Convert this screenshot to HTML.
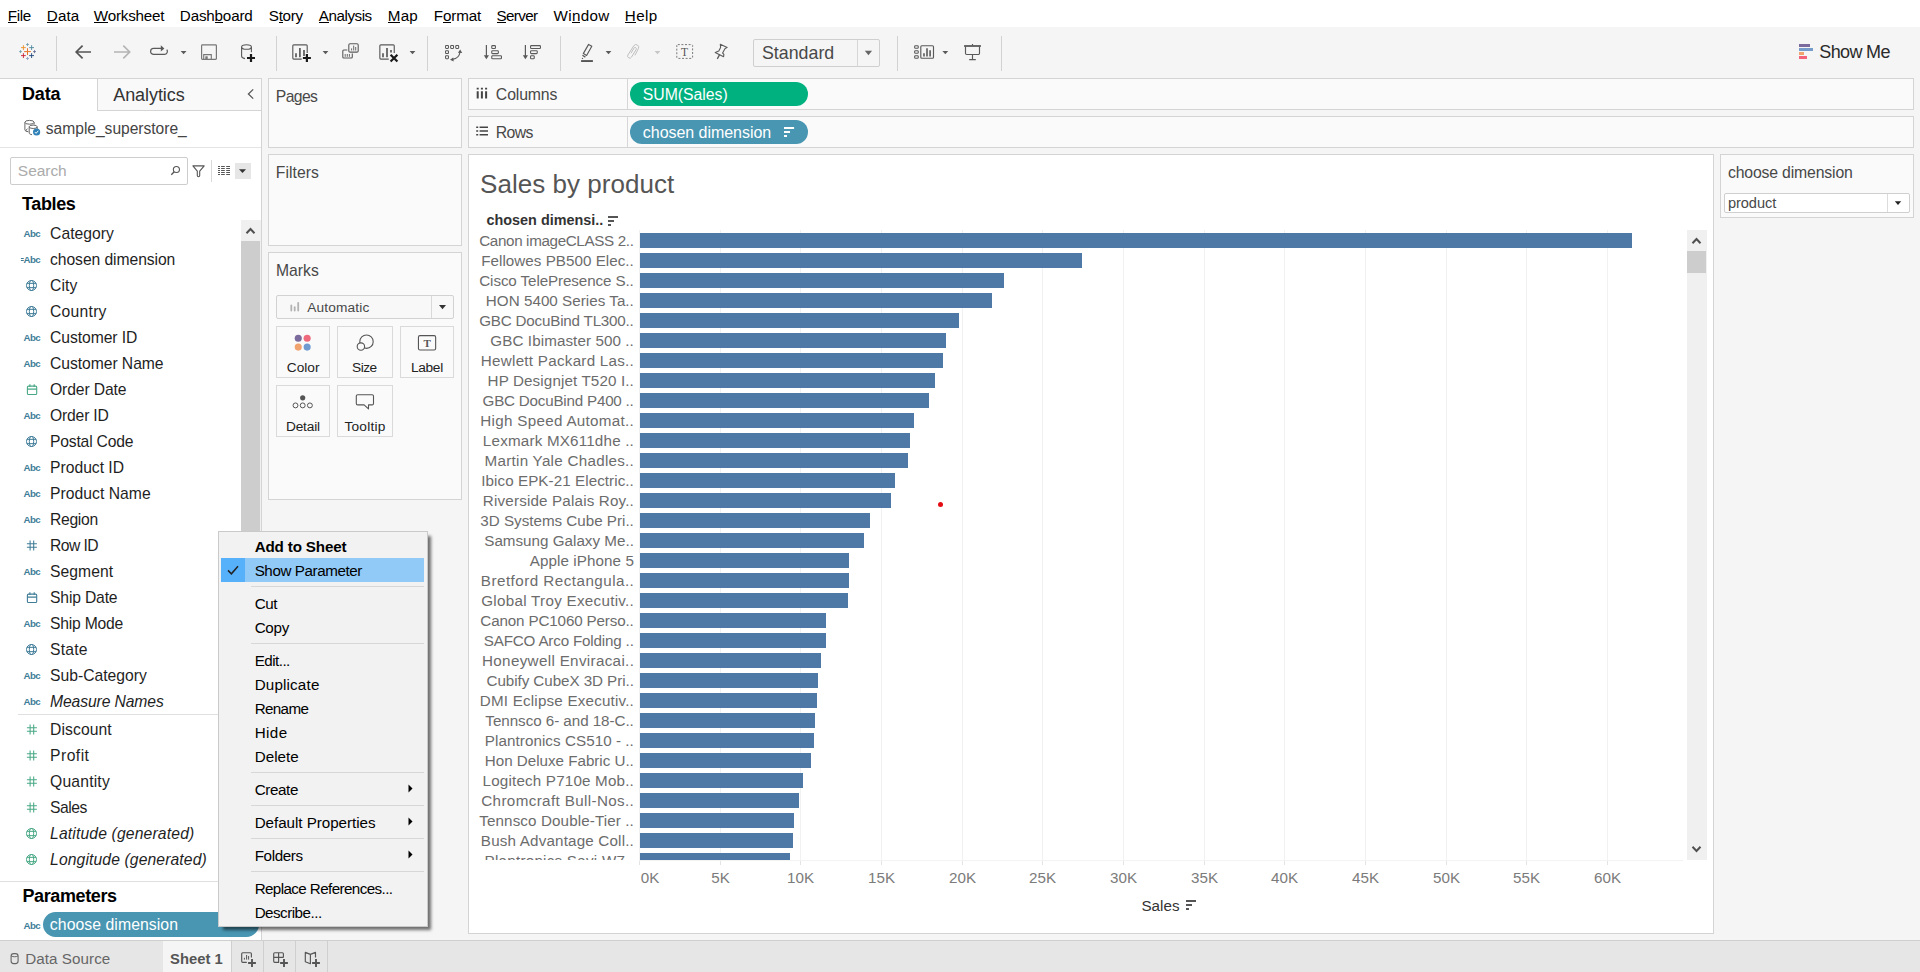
<!DOCTYPE html>
<html lang="en"><head><meta charset="utf-8"><title>Tableau - Sales by product</title>
<style>
*{box-sizing:border-box;margin:0;padding:0}
html,body{width:1920px;height:972px;overflow:hidden;background:#f5f5f5;font-family:"Liberation Sans",sans-serif;color:#333}
#app,#app *{position:absolute}
#app{left:0;top:0;width:1920px;height:972px;overflow:hidden}
.t{white-space:nowrap;line-height:1}
svg{display:block;overflow:visible}
.card{background:#fafafa;border:1px solid #d4d4d4}
.mbtn{background:#fafafa;border:1px solid #dadada}
</style></head><body><div id="app">

<div style="left:0px;top:0px;width:1920px;height:27px;background:#fff"></div>
<div class="t" style="top:8.00px;font-size:15.2px;color:#000;letter-spacing:-0.395px;left:7.85px;">File</div><div style="left:8.1px;top:22px;width:8.9px;height:1px;background:#000"></div>
<div class="t" style="top:8.00px;font-size:15.2px;color:#000;letter-spacing:0.069px;left:46.85px;">Data</div><div style="left:47.0px;top:22px;width:10.6px;height:1px;background:#000"></div>
<div class="t" style="top:8.00px;font-size:15.2px;color:#000;letter-spacing:-0.214px;left:93.85px;">Worksheet</div><div style="left:94.0px;top:22px;width:13.9px;height:1px;background:#000"></div>
<div class="t" style="top:8.00px;font-size:15.2px;color:#000;letter-spacing:-0.177px;left:179.85px;">Dashboard</div><div style="left:214.8px;top:22px;width:8.0px;height:1px;background:#000"></div>
<div class="t" style="top:8.00px;font-size:15.2px;color:#000;letter-spacing:-0.288px;left:268.85px;">Story</div><div style="left:278.9px;top:22px;width:3.8px;height:1px;background:#000"></div>
<div class="t" style="top:8.00px;font-size:15.2px;color:#000;letter-spacing:-0.466px;left:318.85px;">Analysis</div><div style="left:319.1px;top:22px;width:9.7px;height:1px;background:#000"></div>
<div class="t" style="top:8.00px;font-size:15.2px;color:#000;letter-spacing:0.177px;left:387.85px;">Map</div><div style="left:388.1px;top:22px;width:12.3px;height:1px;background:#000"></div>
<div class="t" style="top:8.00px;font-size:15.2px;color:#000;letter-spacing:-0.162px;left:433.85px;">Format</div><div style="left:443.2px;top:22px;width:8.1px;height:1px;background:#000"></div>
<div class="t" style="top:8.00px;font-size:15.2px;color:#000;letter-spacing:-0.627px;left:496.55px;">Server</div><div style="left:496.8px;top:22px;width:9.7px;height:1px;background:#000"></div>
<div class="t" style="top:8.00px;font-size:15.2px;color:#000;letter-spacing:0.314px;left:553.55px;">Window</div><div style="left:572.1px;top:22px;width:8.0px;height:1px;background:#000"></div>
<div class="t" style="top:8.00px;font-size:15.2px;color:#000;letter-spacing:0.350px;left:624.85px;">Help</div><div style="left:625.0px;top:22px;width:10.6px;height:1px;background:#000"></div>
<div style="left:0px;top:27px;width:1920px;height:51px;background:#f5f5f5"></div>
<svg style="left:0;top:27px" width="1920" height="51" viewBox="0 27 1920 51"><path d="M24.1 51.6H30.9M27.5 48.2V55.0" stroke="#e8762d" stroke-width="1.0" fill="none"/><path d="M21.0 47.6H25.799999999999997M23.4 45.2V50.0" stroke="#eb9129" stroke-width="0.9" fill="none"/><path d="M29.200000000000003 47.6H34.0M31.6 45.2V50.0" stroke="#4f8aa0" stroke-width="0.9" fill="none"/><path d="M21.0 55.6H25.799999999999997M23.4 53.2V58.0" stroke="#c72037" stroke-width="0.9" fill="none"/><path d="M29.200000000000003 55.6H34.0M31.6 53.2V58.0" stroke="#1f457e" stroke-width="0.9" fill="none"/><path d="M26.0 44.5H29.0M27.5 43.0V46.0" stroke="#6a9aa8" stroke-width="0.8" fill="none"/><path d="M26.0 58.5H29.0M27.5 57.0V60.0" stroke="#8a9cc5" stroke-width="0.8" fill="none"/><path d="M19.0 51.6H22.0M20.5 50.1V53.1" stroke="#6a9aa8" stroke-width="0.8" fill="none"/><path d="M33.0 51.6H36.0M34.5 50.1V53.1" stroke="#5c6692" stroke-width="0.8" fill="none"/><rect x="56" y="36" width="1" height="35" fill="#d2d2d2"/><rect x="276" y="36" width="1" height="35" fill="#d2d2d2"/><rect x="427" y="36" width="1" height="35" fill="#d2d2d2"/><rect x="560" y="36" width="1" height="35" fill="#d2d2d2"/><rect x="897" y="36" width="1" height="35" fill="#d2d2d2"/><rect x="1001" y="36" width="1" height="35" fill="#d2d2d2"/><path d="M91 52H76.3M82.6 45.6L76.2 52l6.4 6.4" stroke="#555" stroke-width="1.7" fill="none"/><path d="M114 52H129.6M123.3 45.6L129.7 52l-6.4 6.4" stroke="#b4b4b4" stroke-width="1.6" fill="none"/><path d="M161 48.4H153.6a3 3 0 0 0 0 6H164.4a3 3 0 0 0 2.4-4.8" stroke="#5a5a5a" stroke-width="1.2" fill="none"/><path d="M160.8 45.2L164.4 48.4 160.8 51.6z" fill="#5a5a5a"/><path d="M180.7 51h5.8L183.6 54.3z" fill="#5a5a5a"/><rect x="201.6" y="44.9" width="14.8" height="14.4" rx="0.8" stroke="#777" stroke-width="1.2" fill="none"/><path d="M203.7 59.3V54.6H211.3V59.3" stroke="#777" stroke-width="1.1" fill="none"/><rect x="205.3" y="56.3" width="2.4" height="3" fill="#777"/><ellipse cx="246.5" cy="47" rx="4.9" ry="2.3" stroke="#5a5a5a" stroke-width="1.1" fill="none"/><path d="M241.6 47V56.2c0 1.1 1.4 2 3.4 2.4M251.4 47v5.2" stroke="#5a5a5a" stroke-width="1.1" fill="none"/><path d="M247 58H255M251 54V62" stroke="#1a1a1a" stroke-width="2.2" fill="none"/><path d="M307.2 53V45.8a1 1 0 0 0-1-1H293.8a1 1 0 0 0-1 1V58.1a1 1 0 0 0 1 1H301.7" stroke="#5a5a5a" stroke-width="1.15" fill="none"/><path d="M296 57.2V53.3M299.9 57.2V48M304 56V50" stroke="#5a5a5a" stroke-width="1.7"/><path d="M302.9 58H310.9M306.9 54V62" stroke="#1a1a1a" stroke-width="2.2" fill="none"/><path d="M322.6 51h5.8L325.5 54.3z" fill="#5a5a5a"/><rect x="348.8" y="43.8" width="9.4" height="8.3" rx="1.2" stroke="#5a5a5a" stroke-width="1.1" fill="none"/><path d="M351.6 50.5V48.4M353.7 50.5V45.6M355.7 50.5V47" stroke="#5a5a5a" stroke-width="0.9"/><path d="M347.3 50H343.8a1 1 0 0 0-1 1v6a1 1 0 0 0 1 1H351.3a1 1 0 0 0 1-1V53.6" stroke="#5a5a5a" stroke-width="1.1" fill="none"/><path d="M345.2 56.8V54M347.3 56.8V54M349.4 56.8V54" stroke="#5a5a5a" stroke-width="0.9"/><path d="M394.25 53V45.8a1 1 0 0 0-1-1H380.85a1 1 0 0 0-1 1V58.1a1 1 0 0 0 1 1H388.75" stroke="#5a5a5a" stroke-width="1.15" fill="none"/><path d="M383 57.2V53.3M387 57.2V48M391 52.6V50" stroke="#5a5a5a" stroke-width="1.7"/><path d="M390.6 54.7l6.8 6.8M397.4 54.7l-6.8 6.8" stroke="#1a1a1a" stroke-width="2.2"/><path d="M409.6 51h5.8L412.5 54.3z" fill="#5a5a5a"/><rect x="445.55" y="45.55" width="2.9" height="2.9" rx="0.6" stroke="#5a5a5a" stroke-width="1.05" fill="none"/><rect x="450.65000000000003" y="45.55" width="2.9" height="2.9" rx="0.6" stroke="#5a5a5a" stroke-width="1.05" fill="none"/><rect x="455.75" y="45.55" width="2.9" height="2.9" rx="0.6" stroke="#5a5a5a" stroke-width="1.05" fill="none"/><rect x="445.55" y="50.65" width="2.9" height="2.9" rx="0.6" stroke="#5a5a5a" stroke-width="1.05" fill="none"/><rect x="445.55" y="55.75" width="2.9" height="2.9" rx="0.6" stroke="#5a5a5a" stroke-width="1.05" fill="none"/><path d="M452.4 59.4C457 58.6 459.6 55.6 460 52" stroke="#5a5a5a" stroke-width="1.15" fill="none"/><path d="M460.2 49.6l2 3.4-4.3-.3zM450 59.7l3.2-2.3.5 4.1z" fill="#5a5a5a"/><path d="M486.4 45V56" stroke="#5a5a5a" stroke-width="1.2"/><path d="M483.79999999999995 55.2h5.2L486.4 59.2z" fill="#5a5a5a"/><rect x="491.75" y="45.6" width="3.6999999999999997" height="2.9" rx="0.8" stroke="#5a5a5a" stroke-width="1.1" fill="none"/><rect x="491.75" y="50.7" width="6.6" height="2.9" rx="0.8" stroke="#5a5a5a" stroke-width="1.1" fill="none"/><rect x="491.75" y="55.8" width="9.700000000000001" height="2.9" rx="0.8" stroke="#5a5a5a" stroke-width="1.1" fill="none"/><path d="M525.4 45V56" stroke="#5a5a5a" stroke-width="1.2"/><path d="M522.8 55.2h5.2L525.4 59.2z" fill="#5a5a5a"/><rect x="530.55" y="45.6" width="9.9" height="2.9" rx="0.8" stroke="#5a5a5a" stroke-width="1.1" fill="none"/><rect x="530.55" y="50.7" width="6.699999999999999" height="2.9" rx="0.8" stroke="#5a5a5a" stroke-width="1.1" fill="none"/><rect x="530.55" y="55.8" width="3.6999999999999997" height="2.9" rx="0.8" stroke="#5a5a5a" stroke-width="1.1" fill="none"/><path d="M588.6 44.4L591.8 46.2 586.6 55.5 583.3 53.6z" stroke="#5a5a5a" stroke-width="1.15" fill="none" stroke-linejoin="round"/><path d="M582.4 55.3L585.4 57.1" stroke="#5a5a5a" stroke-width="1.3"/><circle cx="582.5" cy="58.4" r=".7" fill="#5a5a5a"/><rect x="581.1" y="60.1" width="11.8" height="1.9" fill="#555"/><path d="M605.6 51h5.8L608.5 54.3z" fill="#5a5a5a"/><path d="M634.9 55.4L638.5 48.3A2.7 2.7 0 0 0 633.9 45.6L627.9 55A2.1 2.1 0 0 0 631.6 57L636.3 49.2A1.3 1.3 0 0 0 634.1 47.9L631 53.2" stroke="#bcbcbc" stroke-width="0.95" fill="none"/><path d="M654.6 51h5.8L657.5 54.3z" fill="#c6c6c6"/><rect x="676.8" y="44.6" width="15.8" height="13.8" rx="1" stroke="#7a7a7a" stroke-width="1" stroke-dasharray="2 1.6" fill="none"/><text x="684.6" y="56" text-anchor="middle" font-family="Liberation Serif,serif" font-size="11.5" fill="#555">T</text><path d="M720.3 44.2L727.2 47.4 724.9 48.8 722.6 53 723.9 54.3 723.6 56.7 715.2 52.4 718.8 51.1 720.6 47.5z" stroke="#5a5a5a" stroke-width="1.1" fill="none" stroke-linejoin="round"/><path d="M719.6 54.6L717.3 58.9" stroke="#5a5a5a" stroke-width="1.3"/><rect x="914.65" y="45.75" width="3.6" height="2.5" rx="0.8" stroke="#5a5a5a" stroke-width="1.1" fill="none"/><rect x="914.65" y="50.75" width="3.6" height="2.5" rx="0.8" stroke="#5a5a5a" stroke-width="1.1" fill="none"/><rect x="914.65" y="55.75" width="3.6" height="2.5" rx="0.8" stroke="#5a5a5a" stroke-width="1.1" fill="none"/><rect x="920.8" y="45.75" width="12.7" height="12.5" rx="1" stroke="#5a5a5a" stroke-width="1.15" fill="none"/><path d="M924 56.6V53.2M927 56.6V48.2M930.1 56.6V50.2" stroke="#5a5a5a" stroke-width="1.6"/><path d="M942.4 51h5.8L945.3 54.3z" fill="#5a5a5a"/><path d="M964.1 46H980.9" stroke="#5a5a5a" stroke-width="1.8"/><path d="M972.5 44v1.5M965.5 46.5V53.3a1.2 1.2 0 0 0 1.2 1.2H978.3a1.2 1.2 0 0 0 1.2-1.2V46.5M972.5 54.5V59.6M969.2 59.6H975.8" stroke="#5a5a5a" stroke-width="1.15" fill="none"/><rect x="1799" y="44" width="11" height="3" fill="#7b6b9c"/><rect x="1799" y="48" width="14" height="3" fill="#769ccb"/><rect x="1799" y="52" width="5" height="3" fill="#f0a36f"/><rect x="1799" y="56" width="8" height="3" fill="#f3647b"/><path d="M864.8 50.8h7.3L868.45 55.2z" fill="#666"/></svg>
<div style="left:753px;top:39px;width:127px;height:28px;border:1px solid #cfcfcf;border-radius:2px"></div>
<div style="left:857px;top:40px;width:1px;height:26px;background:#d6d6d6"></div>
<div class="t" style="top:45.00px;font-size:17.8px;color:#484848;letter-spacing:0.018px;left:761.95px;">Standard</div>
<div class="t" style="top:43.00px;font-size:18px;color:#2a2a2a;letter-spacing:-0.658px;left:1819.35px;">Show Me</div>
<div style="left:0px;top:78px;width:262px;height:862px;background:#fff;border-right:1px solid #d4d4d4"></div>
<div style="left:97px;top:78px;width:165px;height:33px;background:#f9f9f9;border:1px solid #d4d4d4"></div>
<div style="left:0px;top:78px;width:262px;height:1px;background:#d4d4d4"></div>
<div class="t" style="top:85.00px;font-size:18px;color:#000;font-weight:bold;letter-spacing:-0.205px;left:22.05px;">Data</div>
<div class="t" style="top:86.00px;font-size:18px;color:#333;letter-spacing:-0.079px;left:113.25px;">Analytics</div>
<svg style="left:245px;top:87px" width="9" height="14" viewBox="245 87 9 14"><path d="M253.2 89.4L248.4 94l4.8 4.6" stroke="#555" stroke-width="1.25" fill="none"/></svg>
<svg style="left:22px;top:118px" width="20" height="20" viewBox="22 118 20 20"><g stroke="#666" stroke-width="1" fill="none"><ellipse cx="29.5" cy="122.3" rx="4.6" ry="1.9"/><path d="M24.9 122.3v7.6c0 .9 1.5 1.6 3.4 1.8M34.1 122.3v2.2"/><ellipse cx="33.2" cy="126.8" rx="4" ry="1.7"/><path d="M29.2 126.8v6.2c0 .8 1.1 1.4 2.8 1.7M37.2 126.8v2.2"/><path d="M27.6 128.6l-1.7 1.7 1.7 1.7"/></g><circle cx="36.6" cy="132" r="3.6" fill="#2f81b7"/><path d="M34.9 132.1l1.2 1.2 2.2-2.5" stroke="#fff" stroke-width="1" fill="none"/></svg>
<div class="t" style="top:121.00px;font-size:15.6px;color:#444;letter-spacing:-0.023px;left:45.85px;">sample_superstore_</div>
<div style="left:0px;top:147px;width:261px;height:1px;background:#e4e4e4"></div>
<div style="left:10px;top:157px;width:178px;height:28px;border:1px solid #cdcdcd;border-radius:2px;background:#fff"></div>
<div class="t" style="top:163.00px;font-size:15.5px;color:#ababab;letter-spacing:-0.045px;left:17.85px;">Search</div>
<svg style="left:169px;top:164px" width="13" height="13" viewBox="169 164 13 13"><circle cx="176.4" cy="169.5" r="3.05" stroke="#555" stroke-width="1.1" fill="none"/><path d="M174.2 171.8L171.3 174.7" stroke="#555" stroke-width="1.3"/></svg>
<svg style="left:191px;top:163px" width="15" height="16" viewBox="191 163 15 16"><path d="M192.9 165.9H204.2L199.7 171.2V175.6a1.2 1.2 0 0 1-2.4 0V171.2z" stroke="#555" stroke-width="1.1" fill="none" stroke-linejoin="round"/></svg>
<div style="left:211px;top:160px;width:1px;height:22px;background:#d9d9d9"></div>
<svg style="left:217px;top:165px" width="15" height="12" viewBox="217 165 15 12"><path d="M218 166.5h2M221.1 166.5h3.7M226.2 166.5h3.8M218 168.5h2M221.1 168.5h3.7M226.2 168.5h3.8M218 170.5h2M221.1 170.5h3.7M226.2 170.5h3.8M218 172.5h2M221.1 172.5h3.7M226.2 172.5h3.8M218 174.5h2M221.1 174.5h3.7M226.2 174.5h3.8" stroke="#555" stroke-width="1"/></svg>
<div style="left:235px;top:163px;width:16px;height:16px;background:#e6e6e6"></div>
<svg style="left:235px;top:163px" width="16" height="16" viewBox="235 163 16 16"><path d="M239 169.2h7L242.5 173z" fill="#333"/></svg>
<div class="t" style="top:195.00px;font-size:18px;color:#000;font-weight:bold;letter-spacing:-0.358px;left:21.95px;">Tables</div>
<div style="left:241px;top:220px;width:20px;height:661px;background:#f0f0f0"></div>
<div style="left:241px;top:241px;width:19px;height:620px;background:#cdcdcd"></div>
<svg style="left:244px;top:226px" width="13" height="9" viewBox="244 226 13 9"><path d="M246.5 233.2L250.5 229 254.5 233.2" stroke="#505050" stroke-width="2" fill="none"/></svg>
<div class="t" style="top:229.00px;font-size:9.7px;color:#3f7c98;font-weight:bold;letter-spacing:-0.606px;left:23.55px;">Abc</div>
<div class="t" style="top:226.00px;font-size:15.7px;color:#1f1f1f;letter-spacing:0.035px;left:50.05px;">Category</div>
<div class="t" style="top:255.00px;font-size:9.7px;color:#3f7c98;font-weight:bold;letter-spacing:-0.606px;left:23.55px;">Abc</div><svg style="left:20px;top:255px" width="5" height="8" viewBox="20 255 5 8"><path d="M20.9 258.5h2.9M20.9 260.5h2.9" stroke="#3f7c98" stroke-width="1.05"/></svg>
<div class="t" style="top:252.00px;font-size:15.7px;color:#1f1f1f;letter-spacing:-0.077px;left:50.05px;">chosen dimension</div>
<svg style="left:24px;top:277px" width="16" height="16" viewBox="24 277 16 16"><g stroke="#3f7c98" stroke-width="1" fill="none"><circle cx="31.5" cy="285.5" r="5"/><ellipse cx="31.5" cy="285.5" rx="2.15" ry="5"/><path d="M26.8 283.35h9.4M26.8 287.65h9.4"/></g></svg>
<div class="t" style="top:278.00px;font-size:15.7px;color:#1f1f1f;letter-spacing:0.123px;left:50.05px;">City</div>
<svg style="left:24px;top:303px" width="16" height="16" viewBox="24 303 16 16"><g stroke="#3f7c98" stroke-width="1" fill="none"><circle cx="31.5" cy="311.5" r="5"/><ellipse cx="31.5" cy="311.5" rx="2.15" ry="5"/><path d="M26.8 309.35h9.4M26.8 313.65h9.4"/></g></svg>
<div class="t" style="top:304.00px;font-size:15.7px;color:#1f1f1f;letter-spacing:0.244px;left:50.05px;">Country</div>
<div class="t" style="top:333.00px;font-size:9.7px;color:#3f7c98;font-weight:bold;letter-spacing:-0.606px;left:23.55px;">Abc</div>
<div class="t" style="top:330.00px;font-size:15.7px;color:#1f1f1f;letter-spacing:-0.075px;left:50.05px;">Customer ID</div>
<div class="t" style="top:359.00px;font-size:9.7px;color:#3f7c98;font-weight:bold;letter-spacing:-0.606px;left:23.55px;">Abc</div>
<div class="t" style="top:356.00px;font-size:15.7px;color:#1f1f1f;letter-spacing:-0.059px;left:50.05px;">Customer Name</div>
<svg style="left:24px;top:381px" width="16" height="16" viewBox="24 381 16 16"><g stroke="#48a885" stroke-width="1.1" fill="none"><rect x="27.4" y="386.1" width="9.3" height="8.4" rx="1.1"/><path d="M27.4 389.1h9.3M29.9 384.3v2.6M34.199999999999996 384.3v2.6"/></g></svg>
<div class="t" style="top:382.00px;font-size:15.7px;color:#1f1f1f;letter-spacing:-0.134px;left:50.05px;">Order Date</div>
<div class="t" style="top:411.00px;font-size:9.7px;color:#3f7c98;font-weight:bold;letter-spacing:-0.606px;left:23.55px;">Abc</div>
<div class="t" style="top:408.00px;font-size:15.7px;color:#1f1f1f;letter-spacing:-0.194px;left:50.05px;">Order ID</div>
<svg style="left:24px;top:433px" width="16" height="16" viewBox="24 433 16 16"><g stroke="#3f7c98" stroke-width="1" fill="none"><circle cx="31.5" cy="441.5" r="5"/><ellipse cx="31.5" cy="441.5" rx="2.15" ry="5"/><path d="M26.8 439.35h9.4M26.8 443.65h9.4"/></g></svg>
<div class="t" style="top:434.00px;font-size:15.7px;color:#1f1f1f;letter-spacing:-0.207px;left:50.05px;">Postal Code</div>
<div class="t" style="top:463.00px;font-size:9.7px;color:#3f7c98;font-weight:bold;letter-spacing:-0.606px;left:23.55px;">Abc</div>
<div class="t" style="top:460.00px;font-size:15.7px;color:#1f1f1f;letter-spacing:-0.014px;left:50.05px;">Product ID</div>
<div class="t" style="top:489.00px;font-size:9.7px;color:#3f7c98;font-weight:bold;letter-spacing:-0.606px;left:23.55px;">Abc</div>
<div class="t" style="top:486.00px;font-size:15.7px;color:#1f1f1f;letter-spacing:0.029px;left:50.05px;">Product Name</div>
<div class="t" style="top:515.00px;font-size:9.7px;color:#3f7c98;font-weight:bold;letter-spacing:-0.606px;left:23.55px;">Abc</div>
<div class="t" style="top:512.00px;font-size:15.7px;color:#1f1f1f;letter-spacing:-0.324px;left:50.05px;">Region</div>
<svg style="left:24px;top:537px" width="16" height="16" viewBox="24 537 16 16"><path d="M30.099999999999998 540.5v10M33.699999999999996 540.5v10M26.9 543.7h10M26.9 547.3h10" stroke="#3f7c98" stroke-width="1.05"/></svg>
<div class="t" style="top:538.00px;font-size:15.7px;color:#1f1f1f;letter-spacing:-0.567px;left:50.05px;">Row ID</div>
<div class="t" style="top:567.00px;font-size:9.7px;color:#3f7c98;font-weight:bold;letter-spacing:-0.606px;left:23.55px;">Abc</div>
<div class="t" style="top:564.00px;font-size:15.7px;color:#1f1f1f;letter-spacing:0.051px;left:50.05px;">Segment</div>
<svg style="left:24px;top:589px" width="16" height="16" viewBox="24 589 16 16"><g stroke="#3f7c98" stroke-width="1.1" fill="none"><rect x="27.4" y="594.0999999999999" width="9.3" height="8.4" rx="1.1"/><path d="M27.4 597.0999999999999h9.3M29.9 592.3v2.6M34.199999999999996 592.3v2.6"/></g></svg>
<div class="t" style="top:590.00px;font-size:15.7px;color:#1f1f1f;letter-spacing:-0.176px;left:50.05px;">Ship Date</div>
<div class="t" style="top:619.00px;font-size:9.7px;color:#3f7c98;font-weight:bold;letter-spacing:-0.606px;left:23.55px;">Abc</div>
<div class="t" style="top:616.00px;font-size:15.7px;color:#1f1f1f;letter-spacing:-0.212px;left:50.05px;">Ship Mode</div>
<svg style="left:24px;top:641px" width="16" height="16" viewBox="24 641 16 16"><g stroke="#3f7c98" stroke-width="1" fill="none"><circle cx="31.5" cy="649.5" r="5"/><ellipse cx="31.5" cy="649.5" rx="2.15" ry="5"/><path d="M26.8 647.35h9.4M26.8 651.65h9.4"/></g></svg>
<div class="t" style="top:642.00px;font-size:15.7px;color:#1f1f1f;letter-spacing:0.190px;left:50.05px;">State</div>
<div class="t" style="top:671.00px;font-size:9.7px;color:#3f7c98;font-weight:bold;letter-spacing:-0.606px;left:23.55px;">Abc</div>
<div class="t" style="top:668.00px;font-size:15.7px;color:#1f1f1f;letter-spacing:-0.009px;left:50.05px;">Sub-Category</div>
<div class="t" style="top:697.00px;font-size:9.7px;color:#3f7c98;font-weight:bold;letter-spacing:-0.606px;left:23.55px;">Abc</div>
<div class="t" style="top:694.00px;font-size:15.7px;color:#1f1f1f;font-style:italic;letter-spacing:-0.116px;left:50.05px;">Measure Names</div>
<div style="left:18px;top:714px;width:223px;height:1px;background:#e0e0e0"></div>
<svg style="left:24px;top:721px" width="16" height="16" viewBox="24 721 16 16"><path d="M30.099999999999998 724.5v10M33.699999999999996 724.5v10M26.9 727.7h10M26.9 731.3h10" stroke="#48a885" stroke-width="1.05"/></svg>
<div class="t" style="top:722.00px;font-size:15.7px;color:#1f1f1f;letter-spacing:0.093px;left:50.05px;">Discount</div>
<svg style="left:24px;top:747px" width="16" height="16" viewBox="24 747 16 16"><path d="M30.099999999999998 750.5v10M33.699999999999996 750.5v10M26.9 753.7h10M26.9 757.3h10" stroke="#48a885" stroke-width="1.05"/></svg>
<div class="t" style="top:748.00px;font-size:15.7px;color:#1f1f1f;letter-spacing:0.455px;left:50.05px;">Profit</div>
<svg style="left:24px;top:773px" width="16" height="16" viewBox="24 773 16 16"><path d="M30.099999999999998 776.5v10M33.699999999999996 776.5v10M26.9 779.7h10M26.9 783.3h10" stroke="#48a885" stroke-width="1.05"/></svg>
<div class="t" style="top:774.00px;font-size:15.7px;color:#1f1f1f;letter-spacing:0.180px;left:50.05px;">Quantity</div>
<svg style="left:24px;top:799px" width="16" height="16" viewBox="24 799 16 16"><path d="M30.099999999999998 802.5v10M33.699999999999996 802.5v10M26.9 805.7h10M26.9 809.3h10" stroke="#48a885" stroke-width="1.05"/></svg>
<div class="t" style="top:800.00px;font-size:15.7px;color:#1f1f1f;letter-spacing:-0.463px;left:50.05px;">Sales</div>
<svg style="left:24px;top:825px" width="16" height="16" viewBox="24 825 16 16"><g stroke="#48a885" stroke-width="1" fill="none"><circle cx="31.5" cy="833.5" r="5"/><ellipse cx="31.5" cy="833.5" rx="2.15" ry="5"/><path d="M26.8 831.35h9.4M26.8 835.65h9.4"/></g></svg>
<div class="t" style="top:826.00px;font-size:15.7px;color:#1f1f1f;font-style:italic;letter-spacing:0.153px;left:50.05px;">Latitude (generated)</div>
<svg style="left:24px;top:851px" width="16" height="16" viewBox="24 851 16 16"><g stroke="#48a885" stroke-width="1" fill="none"><circle cx="31.5" cy="859.5" r="5"/><ellipse cx="31.5" cy="859.5" rx="2.15" ry="5"/><path d="M26.8 857.35h9.4M26.8 861.65h9.4"/></g></svg>
<div class="t" style="top:852.00px;font-size:15.7px;color:#1f1f1f;font-style:italic;letter-spacing:0.115px;left:50.05px;">Longitude (generated)</div>
<div style="left:0px;top:881px;width:261px;height:1px;background:#e0e0e0"></div>
<div class="t" style="top:887.00px;font-size:18px;color:#000;font-weight:bold;letter-spacing:-0.375px;left:22.45px;">Parameters</div>
<div class="t" style="top:921.00px;font-size:9.7px;color:#3f7c98;font-weight:bold;letter-spacing:-0.606px;left:23.55px;">Abc</div>
<div style="left:43px;top:912px;width:216px;height:25px;border-radius:12.5px;background:#4996b2"></div>
<div class="t" style="top:917.00px;font-size:15.8px;color:#fff;letter-spacing:0.050px;left:49.85px;">choose dimension</div>
<div class="card" style="left:268px;top:78px;width:194px;height:70px"></div>
<div class="t" style="top:89.00px;font-size:15.7px;color:#484848;letter-spacing:-0.596px;left:275.85px;">Pages</div>
<div class="card" style="left:268px;top:154px;width:194px;height:92px"></div>
<div class="t" style="top:165.00px;font-size:15.7px;color:#484848;letter-spacing:0.030px;left:275.85px;">Filters</div>
<div class="card" style="left:268px;top:252px;width:194px;height:248px"></div>
<div class="t" style="top:263.00px;font-size:15.7px;color:#484848;letter-spacing:0.045px;left:275.95px;">Marks</div>
<div style="left:276px;top:295px;width:178px;height:24px;border:1px solid #d2d2d2;border-radius:2px;background:#f8f8f8"></div>
<div style="left:431px;top:296px;width:1px;height:22px;background:#d9d9d9"></div>
<svg style="left:288px;top:300px" width="14" height="13" viewBox="288 300 14 13"><path d="M291.3 310.6V305.4M294.7 310.6V307.1M298.2 310.6V303" stroke="#b3b3b3" stroke-width="1.8" stroke-linecap="round"/></svg>
<div class="t" style="top:301.00px;font-size:13.7px;color:#484848;letter-spacing:0.130px;left:307.35px;">Automatic</div>
<svg style="left:436px;top:302px" width="12" height="10" viewBox="436 302 12 10"><path d="M439 305h7L442.5 309.3z" fill="#333"/></svg>
<div class="mbtn" style="left:276px;top:326px;width:54px;height:52px"></div>
<svg style="left:292px;top:332px" width="20" height="20" viewBox="292 332 20 20"><circle cx="298.25" cy="338.3" r="3.55" fill="#7b6b9c"/><circle cx="307.15" cy="338.3" r="3.55" fill="#ee6a7c"/><circle cx="298.25" cy="347.09999999999997" r="3.55" fill="#f0a36f"/><circle cx="307.15" cy="347.09999999999997" r="3.55" fill="#6f9bd1"/></svg>
<div class="t" style="top:361.00px;font-size:13.7px;color:#222;letter-spacing:-0.005px;left:286.85px;">Color</div>
<div class="mbtn" style="left:337px;top:326px;width:56px;height:52px"></div>
<svg style="left:353px;top:332px" width="22" height="20" viewBox="353 332 22 20"><circle cx="366.5" cy="341.7" r="6.7" stroke="#555" stroke-width="1.1" fill="none"/><circle cx="360.9" cy="346.59999999999997" r="3.7" stroke="#555" stroke-width="1.1" fill="#fafafa"/></svg>
<div class="t" style="top:361.00px;font-size:13.7px;color:#222;letter-spacing:-0.514px;left:352.05px;">Size</div>
<div class="mbtn" style="left:400px;top:326px;width:54px;height:52px"></div>
<svg style="left:417px;top:333px" width="20" height="18" viewBox="417 333 20 18"><rect x="418.45" y="335.65000000000003" width="17.2" height="14.4" rx="1.5" stroke="#555" stroke-width="1.1" fill="none"/><text x="427.05" y="346.85" text-anchor="middle" font-family="Liberation Serif,serif" font-weight="bold" font-size="11" fill="#555">T</text></svg>
<div class="t" style="top:361.00px;font-size:13.7px;color:#222;letter-spacing:-0.325px;left:411.00px;">Label</div>
<div class="mbtn" style="left:276px;top:385px;width:54px;height:52px"></div>
<svg style="left:291px;top:393px" width="22" height="16" viewBox="291 393 22 16"><circle cx="302.7" cy="397.8" r="2.6" fill="#555"/><g stroke="#555" stroke-width="1" fill="none"><circle cx="295.5" cy="405.40000000000003" r="2.45"/><circle cx="302.7" cy="405.40000000000003" r="2.45"/><circle cx="309.9" cy="405.40000000000003" r="2.45"/></g></svg>
<div class="t" style="top:420.00px;font-size:13.7px;color:#222;letter-spacing:-0.180px;left:285.95px;">Detail</div>
<div class="mbtn" style="left:337px;top:385px;width:56px;height:52px"></div>
<svg style="left:354px;top:393px" width="20" height="19" viewBox="354 393 20 19"><path d="M357.69999999999993 394.7h14.4a1.4 1.4 0 0 1 1.4 1.4v7.4a1.4 1.4 0 0 1-1.4 1.4h-3.6V408.9l-4.4-4H357.69999999999993a1.4 1.4 0 0 1-1.4-1.4V396.09999999999997a1.4 1.4 0 0 1 1.4-1.4z" stroke="#555" stroke-width="1.1" fill="none" stroke-linejoin="round"/></svg>
<div class="t" style="top:420.00px;font-size:13.7px;color:#222;letter-spacing:0.237px;left:344.40px;">Tooltip</div>
<div class="card" style="left:468px;top:78px;width:1446px;height:32px"></div>
<div style="left:627px;top:79px;width:1px;height:30px;background:#d6d6d6"></div>
<div class="t" style="top:87.00px;font-size:15.8px;color:#484848;letter-spacing:-0.124px;left:495.85px;">Columns</div>
<div class="card" style="left:468px;top:116px;width:1446px;height:32px"></div>
<div style="left:627px;top:117px;width:1px;height:30px;background:#d6d6d6"></div>
<div class="t" style="top:125.00px;font-size:15.8px;color:#484848;letter-spacing:-0.633px;left:495.85px;">Rows</div>
<svg style="left:475px;top:86px" width="14" height="14" viewBox="475 86 14 14"><path d="M477.7 91.2v7.4M481.9 91.2v7.4M486.1 91.2v7.4" stroke="#444" stroke-width="2"/><path d="M476.7 88.6h2M480.9 88.6h2M485.1 88.6h2" stroke="#444" stroke-width="1.9"/></svg>
<svg style="left:475px;top:125px" width="14" height="12" viewBox="475 125 14 12"><path d="M479.6 127.2h8.4M479.6 131h8.4M479.6 134.8h8.4" stroke="#444" stroke-width="1.5"/><path d="M476.2 127.2h2M476.2 131h2M476.2 134.8h2" stroke="#444" stroke-width="1.5"/></svg>
<div style="left:630px;top:82px;width:178px;height:24px;border-radius:12px;background:#00b180"></div>
<div class="t" style="top:87.00px;font-size:15.8px;color:#fff;letter-spacing:-0.027px;left:642.85px;">SUM(Sales)</div>
<div style="left:630px;top:120px;width:178px;height:24px;border-radius:12px;background:#4996b2"></div>
<div class="t" style="top:125.00px;font-size:16px;color:#fff;letter-spacing:-0.045px;left:642.85px;">chosen dimension</div>
<svg style="left:782px;top:126px" width="14" height="13" viewBox="782 126 14 13"><path d="M784 128H794.1M784 132H790M784 136H787" stroke="#fff" stroke-width="2"/></svg>
<div style="left:468px;top:154px;width:1246px;height:780px;background:#fff;border:1px solid #d4d4d4"></div>
<div class="t" style="top:171.00px;font-size:26px;color:#555;letter-spacing:0.035px;left:480.05px;">Sales by product</div>
<div class="t" style="top:213.00px;font-size:14.4px;color:#333;font-weight:bold;letter-spacing:0.009px;left:486.45px;">chosen dimensi..</div>
<svg style="left:607px;top:215px" width="13" height="12" viewBox="607 215 13 12"><path d="M608 217H618M608 221H614M608 225H611" stroke="#555" stroke-width="2"/></svg>
<div style="left:470px;top:230px;width:1216px;height:630px;overflow:hidden"><div style="left:-470px;top:-230px;width:1920px;height:972px">
<div style="left:639px;top:230px;width:1px;height:630px;background:#f1f1f1"></div>
<div style="left:720px;top:230px;width:1px;height:630px;background:#f1f1f1"></div>
<div style="left:800px;top:230px;width:1px;height:630px;background:#f1f1f1"></div>
<div style="left:881px;top:230px;width:1px;height:630px;background:#f1f1f1"></div>
<div style="left:962px;top:230px;width:1px;height:630px;background:#f1f1f1"></div>
<div style="left:1042px;top:230px;width:1px;height:630px;background:#f1f1f1"></div>
<div style="left:1123px;top:230px;width:1px;height:630px;background:#f1f1f1"></div>
<div style="left:1204px;top:230px;width:1px;height:630px;background:#f1f1f1"></div>
<div style="left:1284px;top:230px;width:1px;height:630px;background:#f1f1f1"></div>
<div style="left:1365px;top:230px;width:1px;height:630px;background:#f1f1f1"></div>
<div style="left:1446px;top:230px;width:1px;height:630px;background:#f1f1f1"></div>
<div style="left:1526px;top:230px;width:1px;height:630px;background:#f1f1f1"></div>
<div style="left:1607px;top:230px;width:1px;height:630px;background:#f1f1f1"></div>
<div style="left:640px;top:233px;width:992px;height:15px;background:#4e79a7"></div>
<div class="t" style="top:233.00px;font-size:15.2px;color:#6c6c6c;letter-spacing:-0.350px;left:479.25px;">Canon imageCLASS 2..</div>
<div style="left:640px;top:253px;width:442px;height:15px;background:#4e79a7"></div>
<div class="t" style="top:253.00px;font-size:15.2px;color:#6c6c6c;letter-spacing:0.032px;left:481.25px;">Fellowes PB500 Elec..</div>
<div style="left:640px;top:273px;width:364px;height:15px;background:#4e79a7"></div>
<div class="t" style="top:273.00px;font-size:15.2px;color:#6c6c6c;letter-spacing:-0.102px;left:479.25px;">Cisco TelePresence S..</div>
<div style="left:640px;top:293px;width:352px;height:15px;background:#4e79a7"></div>
<div class="t" style="top:293.00px;font-size:15.2px;color:#6c6c6c;letter-spacing:0.029px;left:485.85px;">HON 5400 Series Ta..</div>
<div style="left:640px;top:313px;width:319px;height:15px;background:#4e79a7"></div>
<div class="t" style="top:313.00px;font-size:15.2px;color:#6c6c6c;letter-spacing:-0.202px;left:479.25px;">GBC DocuBind TL300..</div>
<div style="left:640px;top:333px;width:306px;height:15px;background:#4e79a7"></div>
<div class="t" style="top:333.00px;font-size:15.2px;color:#6c6c6c;letter-spacing:0.089px;left:490.35px;">GBC Ibimaster 500 ..</div>
<div style="left:640px;top:353px;width:303px;height:15px;background:#4e79a7"></div>
<div class="t" style="top:353.00px;font-size:15.2px;color:#6c6c6c;letter-spacing:0.263px;left:480.85px;">Hewlett Packard Las..</div>
<div style="left:640px;top:373px;width:295px;height:15px;background:#4e79a7"></div>
<div class="t" style="top:373.00px;font-size:15.2px;color:#6c6c6c;letter-spacing:0.124px;left:487.55px;">HP Designjet T520 I..</div>
<div style="left:640px;top:393px;width:289px;height:15px;background:#4e79a7"></div>
<div class="t" style="top:393.00px;font-size:15.2px;color:#6c6c6c;letter-spacing:-0.213px;left:482.55px;">GBC DocuBind P400 ..</div>
<div style="left:640px;top:413px;width:274px;height:15px;background:#4e79a7"></div>
<div class="t" style="top:413.00px;font-size:15.2px;color:#6c6c6c;letter-spacing:0.302px;left:480.35px;">High Speed Automat..</div>
<div style="left:640px;top:433px;width:270px;height:15px;background:#4e79a7"></div>
<div class="t" style="top:433.00px;font-size:15.2px;color:#6c6c6c;letter-spacing:0.197px;left:482.85px;">Lexmark MX611dhe ..</div>
<div style="left:640px;top:453px;width:268px;height:15px;background:#4e79a7"></div>
<div class="t" style="top:453.00px;font-size:15.2px;color:#6c6c6c;letter-spacing:0.275px;left:484.55px;">Martin Yale Chadles..</div>
<div style="left:640px;top:473px;width:255px;height:15px;background:#4e79a7"></div>
<div class="t" style="top:473.00px;font-size:15.2px;color:#6c6c6c;letter-spacing:0.068px;left:481.25px;">Ibico EPK-21 Electric..</div>
<div style="left:640px;top:493px;width:251px;height:15px;background:#4e79a7"></div>
<div class="t" style="top:493.00px;font-size:15.2px;color:#6c6c6c;letter-spacing:0.170px;left:482.85px;">Riverside Palais Roy..</div>
<div style="left:640px;top:513px;width:230px;height:15px;background:#4e79a7"></div>
<div class="t" style="top:513.00px;font-size:15.2px;color:#6c6c6c;letter-spacing:-0.006px;left:480.35px;">3D Systems Cube Pri..</div>
<div style="left:640px;top:533px;width:224px;height:15px;background:#4e79a7"></div>
<div class="t" style="top:533.00px;font-size:15.2px;color:#6c6c6c;letter-spacing:0.011px;left:484.25px;">Samsung Galaxy Me..</div>
<div style="left:640px;top:553px;width:209px;height:15px;background:#4e79a7"></div>
<div class="t" style="top:553.00px;font-size:15.2px;color:#6c6c6c;letter-spacing:0.075px;left:529.85px;">Apple iPhone 5</div>
<div style="left:640px;top:573px;width:209px;height:15px;background:#4e79a7"></div>
<div class="t" style="top:573.00px;font-size:15.2px;color:#6c6c6c;letter-spacing:0.473px;left:480.85px;">Bretford Rectangula..</div>
<div style="left:640px;top:593px;width:208px;height:15px;background:#4e79a7"></div>
<div class="t" style="top:593.00px;font-size:15.2px;color:#6c6c6c;letter-spacing:0.286px;left:481.25px;">Global Troy Executiv..</div>
<div style="left:640px;top:613px;width:186px;height:15px;background:#4e79a7"></div>
<div class="t" style="top:613.00px;font-size:15.2px;color:#6c6c6c;letter-spacing:-0.142px;left:480.35px;">Canon PC1060 Perso..</div>
<div style="left:640px;top:633px;width:186px;height:15px;background:#4e79a7"></div>
<div class="t" style="top:633.00px;font-size:15.2px;color:#6c6c6c;letter-spacing:-0.176px;left:483.75px;">SAFCO Arco Folding ..</div>
<div style="left:640px;top:653px;width:181px;height:15px;background:#4e79a7"></div>
<div class="t" style="top:653.00px;font-size:15.2px;color:#6c6c6c;letter-spacing:0.331px;left:482.05px;">Honeywell Enviracai..</div>
<div style="left:640px;top:673px;width:178px;height:15px;background:#4e79a7"></div>
<div class="t" style="top:673.00px;font-size:15.2px;color:#6c6c6c;letter-spacing:-0.063px;left:486.55px;">Cubify CubeX 3D Pri..</div>
<div style="left:640px;top:693px;width:177px;height:15px;background:#4e79a7"></div>
<div class="t" style="top:693.00px;font-size:15.2px;color:#6c6c6c;letter-spacing:0.193px;left:479.85px;">DMI Eclipse Executiv..</div>
<div style="left:640px;top:713px;width:175px;height:15px;background:#4e79a7"></div>
<div class="t" style="top:713.00px;font-size:15.2px;color:#6c6c6c;letter-spacing:-0.047px;left:485.35px;">Tennsco 6- and 18-C..</div>
<div style="left:640px;top:733px;width:174px;height:15px;background:#4e79a7"></div>
<div class="t" style="top:733.00px;font-size:15.2px;color:#6c6c6c;letter-spacing:0.060px;left:484.85px;">Plantronics CS510 - ..</div>
<div style="left:640px;top:753px;width:171px;height:15px;background:#4e79a7"></div>
<div class="t" style="top:753.00px;font-size:15.2px;color:#6c6c6c;letter-spacing:-0.020px;left:484.85px;">Hon Deluxe Fabric U..</div>
<div style="left:640px;top:773px;width:163px;height:15px;background:#4e79a7"></div>
<div class="t" style="top:773.00px;font-size:15.2px;color:#6c6c6c;letter-spacing:0.186px;left:482.55px;">Logitech P710e Mob..</div>
<div style="left:640px;top:793px;width:159px;height:15px;background:#4e79a7"></div>
<div class="t" style="top:793.00px;font-size:15.2px;color:#6c6c6c;letter-spacing:0.371px;left:481.25px;">Chromcraft Bull-Nos..</div>
<div style="left:640px;top:813px;width:154px;height:15px;background:#4e79a7"></div>
<div class="t" style="top:813.00px;font-size:15.2px;color:#6c6c6c;letter-spacing:0.113px;left:479.25px;">Tennsco Double-Tier ..</div>
<div style="left:640px;top:833px;width:153px;height:15px;background:#4e79a7"></div>
<div class="t" style="top:833.00px;font-size:15.2px;color:#6c6c6c;letter-spacing:0.177px;left:480.85px;">Bush Advantage Coll..</div>
<div style="left:640px;top:853px;width:150px;height:15px;background:#4e79a7"></div>
<div class="t" style="top:853.00px;font-size:15.2px;color:#6c6c6c;letter-spacing:0.248px;left:484.55px;">Plantronics Savi W7..</div>
</div></div>
<div style="left:639px;top:860px;width:1px;height:5px;background:#e4e4e4"></div>
<div class="t" style="top:870.00px;font-size:15.2px;color:#7b7b7b;letter-spacing:0.022px;left:640.85px;">0K</div>
<div style="left:720px;top:860px;width:1px;height:5px;background:#e4e4e4"></div>
<div class="t" style="top:870.00px;font-size:15.2px;color:#7b7b7b;letter-spacing:0.022px;left:711.20px;">5K</div>
<div style="left:800px;top:860px;width:1px;height:5px;background:#e4e4e4"></div>
<div class="t" style="top:870.00px;font-size:15.2px;color:#7b7b7b;letter-spacing:0.084px;left:786.90px;">10K</div>
<div style="left:881px;top:860px;width:1px;height:5px;background:#e4e4e4"></div>
<div class="t" style="top:870.00px;font-size:15.2px;color:#7b7b7b;letter-spacing:0.084px;left:867.90px;">15K</div>
<div style="left:962px;top:860px;width:1px;height:5px;background:#e4e4e4"></div>
<div class="t" style="top:870.00px;font-size:15.2px;color:#7b7b7b;letter-spacing:0.084px;left:948.90px;">20K</div>
<div style="left:1042px;top:860px;width:1px;height:5px;background:#e4e4e4"></div>
<div class="t" style="top:870.00px;font-size:15.2px;color:#7b7b7b;letter-spacing:0.084px;left:1028.90px;">25K</div>
<div style="left:1123px;top:860px;width:1px;height:5px;background:#e4e4e4"></div>
<div class="t" style="top:870.00px;font-size:15.2px;color:#7b7b7b;letter-spacing:0.084px;left:1109.90px;">30K</div>
<div style="left:1204px;top:860px;width:1px;height:5px;background:#e4e4e4"></div>
<div class="t" style="top:870.00px;font-size:15.2px;color:#7b7b7b;letter-spacing:0.084px;left:1190.90px;">35K</div>
<div style="left:1284px;top:860px;width:1px;height:5px;background:#e4e4e4"></div>
<div class="t" style="top:870.00px;font-size:15.2px;color:#7b7b7b;letter-spacing:0.084px;left:1270.90px;">40K</div>
<div style="left:1365px;top:860px;width:1px;height:5px;background:#e4e4e4"></div>
<div class="t" style="top:870.00px;font-size:15.2px;color:#7b7b7b;letter-spacing:0.084px;left:1351.90px;">45K</div>
<div style="left:1446px;top:860px;width:1px;height:5px;background:#e4e4e4"></div>
<div class="t" style="top:870.00px;font-size:15.2px;color:#7b7b7b;letter-spacing:0.084px;left:1432.90px;">50K</div>
<div style="left:1526px;top:860px;width:1px;height:5px;background:#e4e4e4"></div>
<div class="t" style="top:870.00px;font-size:15.2px;color:#7b7b7b;letter-spacing:0.084px;left:1512.90px;">55K</div>
<div style="left:1607px;top:860px;width:1px;height:5px;background:#e4e4e4"></div>
<div class="t" style="top:870.00px;font-size:15.2px;color:#7b7b7b;letter-spacing:0.084px;left:1593.90px;">60K</div>
<div class="t" style="top:898.00px;font-size:15.2px;color:#333;letter-spacing:0.050px;left:1141.45px;">Sales</div>
<svg style="left:1185px;top:899px" width="13" height="12" viewBox="1185 899 13 12"><path d="M1186 901H1196M1186 905H1192M1186 909H1189" stroke="#555" stroke-width="2"/></svg>
<div style="left:639px;top:860px;width:1044px;height:1px;background:#f3f3f3"></div>
<div style="left:938px;top:502px;width:5px;height:5px;border-radius:50%;background:#e40c12"></div>
<div style="left:1687px;top:230px;width:20px;height:630px;background:#f0f0f0"></div>
<div style="left:1687px;top:251px;width:19px;height:22px;background:#cdcdcd"></div>
<svg style="left:1690px;top:236px" width="13" height="9" viewBox="1690 236 13 9"><path d="M1692.5 243.2L1696.5 239 1700.5 243.2" stroke="#505050" stroke-width="2" fill="none"/></svg>
<svg style="left:1690px;top:845px" width="13" height="9" viewBox="1690 845 13 9"><path d="M1692.5 846.8L1696.5 851 1700.5 846.8" stroke="#505050" stroke-width="2" fill="none"/></svg>
<div class="card" style="left:1720px;top:154px;width:194px;height:64px"></div>
<div class="t" style="top:165.00px;font-size:15.8px;color:#484848;letter-spacing:-0.163px;left:1727.95px;">choose dimension</div>
<div style="left:1724px;top:193px;width:186px;height:20px;background:#fff;border:1px solid #cfcfcf;border-radius:2px"></div>
<div style="left:1887px;top:194px;width:1px;height:18px;background:#dcdcdc"></div>
<div class="t" style="top:196.00px;font-size:14.6px;color:#484848;letter-spacing:-0.065px;left:1727.95px;">product</div>
<svg style="left:1892px;top:198px" width="12" height="10" viewBox="1892 198 12 10"><path d="M1894.8 201.2h6.4L1898 205z" fill="#222"/></svg>
<div style="left:0px;top:940px;width:1920px;height:32px;background:#e6e6e6;border-top:1px solid #cfcfcf"></div>
<div style="left:163px;top:941px;width:69px;height:31px;background:#f5f5f5;border-right:1px solid #cfcfcf"></div>
<svg style="left:10px;top:952px" width="10" height="13" viewBox="10 952 10 13"><rect x="11.1" y="953.6" width="7" height="10" rx="2.6" stroke="#666" stroke-width="1.1" fill="none"/><path d="M11.3 956c2 1 4.6 1 6.6 0" stroke="#666" stroke-width="1" fill="none"/></svg>
<div class="t" style="top:951.00px;font-size:15.2px;color:#666;letter-spacing:0.058px;left:25.25px;">Data Source</div>
<div class="t" style="top:952.00px;font-size:14.8px;color:#555;font-weight:bold;letter-spacing:-0.007px;left:170.05px;">Sheet 1</div>
<div style="left:263px;top:941px;width:1px;height:31px;background:#cfcfcf"></div>
<div style="left:295px;top:941px;width:1px;height:31px;background:#cfcfcf"></div>
<div style="left:327px;top:941px;width:1px;height:31px;background:#cfcfcf"></div>
<svg style="left:240px;top:951px" width="18" height="17" viewBox="240 951 18 17"><path d="M251.4 957.5V953.7a1 1 0 0 0-1-1H242.7a1 1 0 0 0-1 1v7.6a1 1 0 0 0 1 1H246.8" stroke="#555" stroke-width="1.15" fill="none"/><path d="M244.4 959.6V957.8M246.6 959.6V955M248.6 959.6V956" stroke="#555" stroke-width="1"/><path d="M248.1 963H255.9M252 959.1V966.9" stroke="#555" stroke-width="1.9"/></svg>
<svg style="left:272px;top:951px" width="18" height="17" viewBox="272 951 18 17"><path d="M283.4 957.4V953.7a1 1 0 0 0-1-1H274.7a1 1 0 0 0-1 1v7.6a1 1 0 0 0 1 1H278.6V952.7M273.7 957.4H283.4" stroke="#555" stroke-width="1.15" fill="none"/><path d="M280.1 963H287.9M284 959.1V966.9" stroke="#555" stroke-width="1.9"/></svg>
<svg style="left:304px;top:951px" width="18" height="17" viewBox="304 951 18 17"><path d="M310.4 954.4L305.3 952.4V961.7L310.4 963.7V954.4L315.5 952.4V957.5" stroke="#555" stroke-width="1.15" fill="none" stroke-linejoin="round"/><path d="M312.1 963H319.9M316 959.1V966.9" stroke="#555" stroke-width="1.9"/></svg>
<div style="left:218px;top:531px;width:210px;height:396px;background:#f2f2f2;border:1px solid #cacaca;box-shadow:4px 4px 3px -1px rgba(0,0,0,.55)"></div>
<div style="left:221px;top:558px;width:203px;height:24px;background:#91c9f7"></div>
<div style="left:221px;top:558px;width:24px;height:24px;background:#56b0fa"></div>
<svg style="left:226px;top:564px" width="14" height="12" viewBox="226 564 14 12"><path d="M228 570.4l3.4 3.4L238 566.2" stroke="#222" stroke-width="1.5" fill="none"/></svg>
<div class="t" style="top:539.00px;font-size:15.2px;color:#000;font-weight:bold;letter-spacing:-0.160px;left:254.65px;">Add to Sheet</div>
<div class="t" style="top:563.00px;font-size:15.2px;color:#000;letter-spacing:-0.417px;left:254.65px;">Show Parameter</div>
<div class="t" style="top:596.00px;font-size:15.2px;color:#000;letter-spacing:-0.370px;left:254.65px;">Cut</div>
<div class="t" style="top:620.00px;font-size:15.2px;color:#000;letter-spacing:-0.256px;left:254.65px;">Copy</div>
<div class="t" style="top:653.00px;font-size:15.2px;color:#000;letter-spacing:-0.524px;left:254.65px;">Edit...</div>
<div class="t" style="top:677.00px;font-size:15.2px;color:#000;letter-spacing:0.171px;left:254.65px;">Duplicate</div>
<div class="t" style="top:701.00px;font-size:15.2px;color:#000;letter-spacing:-0.641px;left:254.65px;">Rename</div>
<div class="t" style="top:725.00px;font-size:15.2px;color:#000;letter-spacing:0.417px;left:254.65px;">Hide</div>
<div class="t" style="top:749.00px;font-size:15.2px;color:#000;letter-spacing:0.039px;left:254.65px;">Delete</div>
<div class="t" style="top:782.00px;font-size:15.2px;color:#000;letter-spacing:-0.379px;left:254.65px;">Create</div>
<div class="t" style="top:815.00px;font-size:15.2px;color:#000;letter-spacing:-0.039px;left:254.65px;">Default Properties</div>
<div class="t" style="top:848.00px;font-size:15.2px;color:#000;letter-spacing:-0.359px;left:254.65px;">Folders</div>
<div class="t" style="top:881.00px;font-size:15.2px;color:#000;letter-spacing:-0.594px;left:254.65px;">Replace References...</div>
<div class="t" style="top:905.00px;font-size:15.2px;color:#000;letter-spacing:-0.509px;left:254.65px;">Describe...</div>
<div style="left:251px;top:586px;width:173px;height:1px;background:#d7d7d7"></div>
<div style="left:251px;top:643px;width:173px;height:1px;background:#d7d7d7"></div>
<div style="left:251px;top:772px;width:173px;height:1px;background:#d7d7d7"></div>
<div style="left:251px;top:805px;width:173px;height:1px;background:#d7d7d7"></div>
<div style="left:251px;top:838px;width:173px;height:1px;background:#d7d7d7"></div>
<div style="left:251px;top:871px;width:173px;height:1px;background:#d7d7d7"></div>
<svg style="left:407px;top:783px" width="6" height="10" viewBox="407 783 6 10"><path d="M408.5 784.5L412.5 788.5L408.5 792.5z" fill="#000"/></svg>
<svg style="left:407px;top:816px" width="6" height="10" viewBox="407 816 6 10"><path d="M408.5 817.5L412.5 821.5L408.5 825.5z" fill="#000"/></svg>
<svg style="left:407px;top:849px" width="6" height="10" viewBox="407 849 6 10"><path d="M408.5 850.5L412.5 854.5L408.5 858.5z" fill="#000"/></svg>
</div></body></html>
